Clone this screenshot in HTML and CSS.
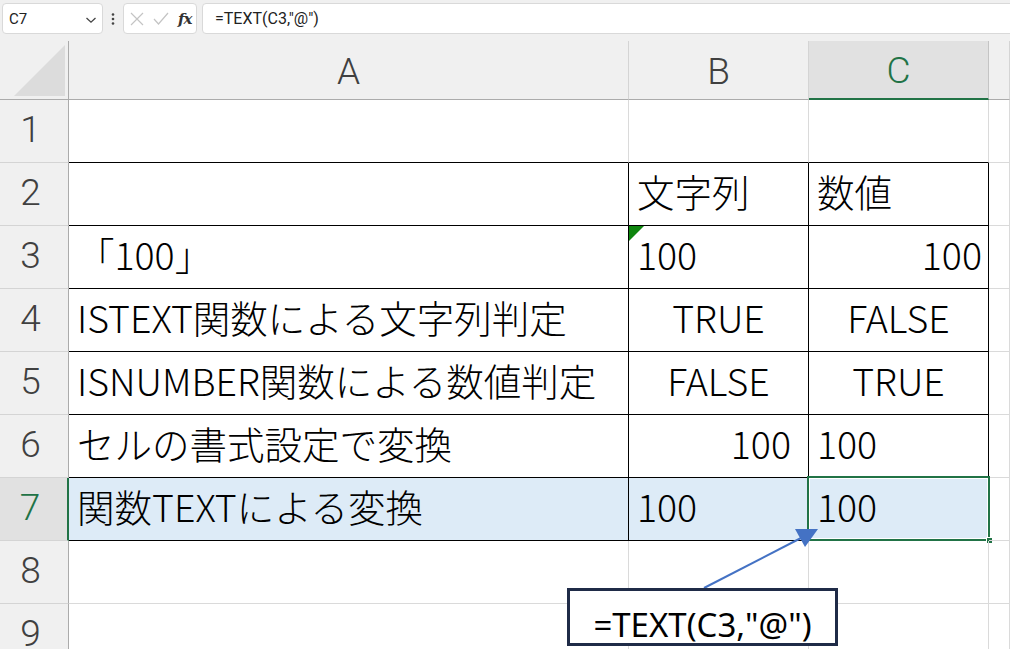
FILE: index.html
```html
<!DOCTYPE html>
<html lang="ja">
<head>
<meta charset="utf-8">
<title>TEXT関数</title>
<link rel="stylesheet" href="styles.css">
</head>
<body>
<div class="app">
  <div class="toolbar">
    <div class="namebox">
      <span class="name">C7</span>
      <svg class="chev" width="12" height="8" viewBox="0 0 12 8"><path d="M1.5 2 L6 6.2 L10.5 2" fill="none" stroke="#444" stroke-width="1.3"/></svg>
    </div>
    <div class="dots">
      <svg width="4" height="12" viewBox="0 0 4 12"><circle cx="2" cy="1.5" r="1.3" fill="#444"/><circle cx="2" cy="6" r="1.3" fill="#444"/><circle cx="2" cy="10.5" r="1.3" fill="#444"/></svg>
    </div>
    <div class="fxbox">
      <svg width="14" height="14" viewBox="0 0 14 14"><path d="M1 1 L13 13 M13 1 L1 13" stroke="#c4c4c4" stroke-width="1.2" fill="none"/></svg>
      <svg width="16" height="14" viewBox="0 0 16 14"><path d="M1 7 L5.5 12 L15 1" stroke="#c4c4c4" stroke-width="1.2" fill="none"/></svg>
      <span class="fx">fx</span>
    </div>
    <div class="formula">=TEXT(C3,"@")</div>
  </div>

  <div class="sheet">
    <div class="corner"><div class="tri"></div></div>
    <div class="ch">A</div>
    <div class="ch">B</div>
    <div class="ch ch-sel">C</div>
    <div class="ch"></div>

    <div class="rh">1</div>
    <div class="c tb"></div>
    <div class="c tb"></div>
    <div class="c tb"></div>
    <div class="c"></div>

    <div class="rh">2</div>
    <div class="c t"></div>
    <div class="c t">文字列</div>
    <div class="c t">数値</div>
    <div class="c"></div>

    <div class="rh">3</div>
    <div class="c t">「100」</div>
    <div class="c t flag">100</div>
    <div class="c t r">100</div>
    <div class="c"></div>

    <div class="rh">4</div>
    <div class="c t">ISTEXT関数による文字列判定</div>
    <div class="c t m">TRUE</div>
    <div class="c t m">FALSE</div>
    <div class="c"></div>

    <div class="rh">5</div>
    <div class="c t">ISNUMBER関数による数値判定</div>
    <div class="c t m">FALSE</div>
    <div class="c t m">TRUE</div>
    <div class="c"></div>

    <div class="rh">6</div>
    <div class="c t">セルの書式設定で変換</div>
    <div class="c t r r2">100</div>
    <div class="c t">100</div>
    <div class="c"></div>

    <div class="rh rh-sel">7</div>
    <div class="c t hl">関数TEXTによる変換</div>
    <div class="c t hl">100</div>
    <div class="c t hl active">100<div class="selbox"><div class="handle"></div></div></div>
    <div class="c"></div>

    <div class="rh">8</div>
    <div class="c"></div>
    <div class="c"></div>
    <div class="c"></div>
    <div class="c"></div>

    <div class="rh">9</div>
    <div class="c"></div>
    <div class="c"></div>
    <div class="c"></div>
    <div class="c"></div>

    <svg class="arrow" width="1010" height="608" viewBox="0 0 1010 608">
      <line x1="704" y1="547" x2="801" y2="497" stroke="#4472c4" stroke-width="2"/>
      <polygon points="818,488 805,506 795,488" fill="#4472c4"/>
    </svg>
    <div class="callout">=TEXT(C3,"@")</div>
  </div>
</div>
</body>
</html>
```

FILE: styles.css
```css
* { box-sizing: border-box; }
html, body { margin: 0; padding: 0; }
body {
  width: 1010px;
  height: 649px;
  overflow: hidden;
  background: #ffffff;
  font-family: Roboto, "Noto Sans", sans-serif;
}
.app { width: 1010px; height: 649px; overflow: hidden; }

/* formula bar */
.toolbar {
  height: 41px;
  background: #f0f0f0;
  display: flex;
  align-items: flex-start;
  padding: 3px 0 0 2px;
}
.namebox {
  width: 101px;
  height: 31px;
  background: #fff;
  border: 1px solid #d9d9d9;
  border-radius: 4px;
  display: flex;
  align-items: center;
  justify-content: space-between;
  padding: 0 5px 0 6px;
}
.name { font-size: 15px; color: #222; }
.chev { margin-top: 2px; }
.dots {
  width: 20px;
  height: 31px;
  display: flex;
  align-items: center;
  justify-content: center;
}
.fxbox {
  width: 74px;
  height: 31px;
  background: #fff;
  border: 1px solid #d9d9d9;
  border-radius: 4px;
  display: flex;
  align-items: center;
  padding: 0 0 0 6px;
  gap: 9px;
}
.fx {
  font-family: "DejaVu Serif", "Liberation Serif", serif;
  font-style: italic;
  font-weight: bold;
  font-size: 15px;
  color: #333;
  letter-spacing: -1px;
}
.formula {
  flex: 1;
  height: 31px;
  margin-left: 5px;
  margin-right: -4px;
  background: #fff;
  border: 1px solid #d9d9d9;
  border-radius: 4px;
  font-size: 16px;
  color: #222;
  display: flex;
  align-items: center;
  padding-left: 12px;
}

/* sheet grid */
.sheet {
  position: relative;
  display: grid;
  grid-template-columns: 69px 560px 180px 180px 1fr;
  grid-template-rows: 59px repeat(9, 63px);
}
.corner {
  background: #f0f0f0;
  border-right: 1px solid #ababab;
  border-bottom: 1px solid #ababab;
  position: relative;
}
.tri {
  position: absolute;
  left: 14px;
  top: 4px;
  width: 0;
  height: 0;
  border-left: 51px solid transparent;
  border-bottom: 51px solid #dcdcdc;
}
.ch {
  background: #f0f0f0;
  border-right: 1px solid #d4d4d4;
  border-bottom: 1px solid #ababab;
  display: flex;
  align-items: center;
  justify-content: center;
  font-size: 37px;
  font-weight: 300;
  color: #404040;
  padding-top: 2px;
}
.ch-sel {
  background: #e1e1e1;
  color: #217346;
  border-right-color: #c4c4c4;
  border-bottom: 2px solid #217346;
}
.rh {
  background: #f0f0f0;
  border-right: 1px solid #ababab;
  border-bottom: 1px solid #d4d4d4;
  display: flex;
  align-items: center;
  justify-content: center;
  font-size: 37px;
  font-weight: 300;
  color: #404040;
  padding: 0 7px 4px 0;
}
.rh-sel {
  background: #e1e1e1;
  color: #217346;
  border-right: 2px solid #217346;
}
.c {
  position: relative;
  border-right: 1px solid #dadada;
  border-bottom: 1px solid #dadada;
  display: flex;
  align-items: flex-end;
  justify-content: flex-start;
  padding: 0 8px 16px 8px;
  font-family: "Noto Sans CJK JP", "Noto Sans", sans-serif;
  font-size: 37.5px;
  font-weight: 300;
  line-height: 1;
  color: #000;
  white-space: nowrap;
}
.tb { border-bottom-color: #000; }
.t { border-right-color: #000; border-bottom-color: #000; }
.r { justify-content: flex-end; padding-right: 6px; }
.r2 { padding-right: 17px; }
.m { justify-content: center; padding-left: 0; padding-right: 0; }
.hl { background: #ddebf7; }
.flag::before {
  content: "";
  position: absolute;
  left: 0;
  top: 0;
  width: 0;
  height: 0;
  border-top: 15px solid #0e850e;
  border-right: 15px solid transparent;
}
.selbox {
  position: absolute;
  left: -2px;
  top: -2px;
  right: -2px;
  bottom: -1px;
  border: 2px solid #217346;
  box-shadow: inset 0 0 0 1px #ffffff;
}
.handle {
  position: absolute;
  right: -5px;
  bottom: -5px;
  width: 7px;
  height: 7px;
  background: #217346;
  border: 1px solid #ffffff;
}

/* callout shape */
.arrow {
  position: absolute;
  left: 0;
  top: 0;
  pointer-events: none;
}
.callout {
  position: absolute;
  left: 567px;
  top: 547px;
  width: 271px;
  height: 58px;
  background: #ffffff;
  border: 3px solid #1f2b47;
  display: flex;
  align-items: flex-end;
  justify-content: center;
  font-family: "Noto Sans", sans-serif;
  font-size: 33px;
  line-height: 1;
  padding-bottom: 2px;
  color: #000;
}
```
